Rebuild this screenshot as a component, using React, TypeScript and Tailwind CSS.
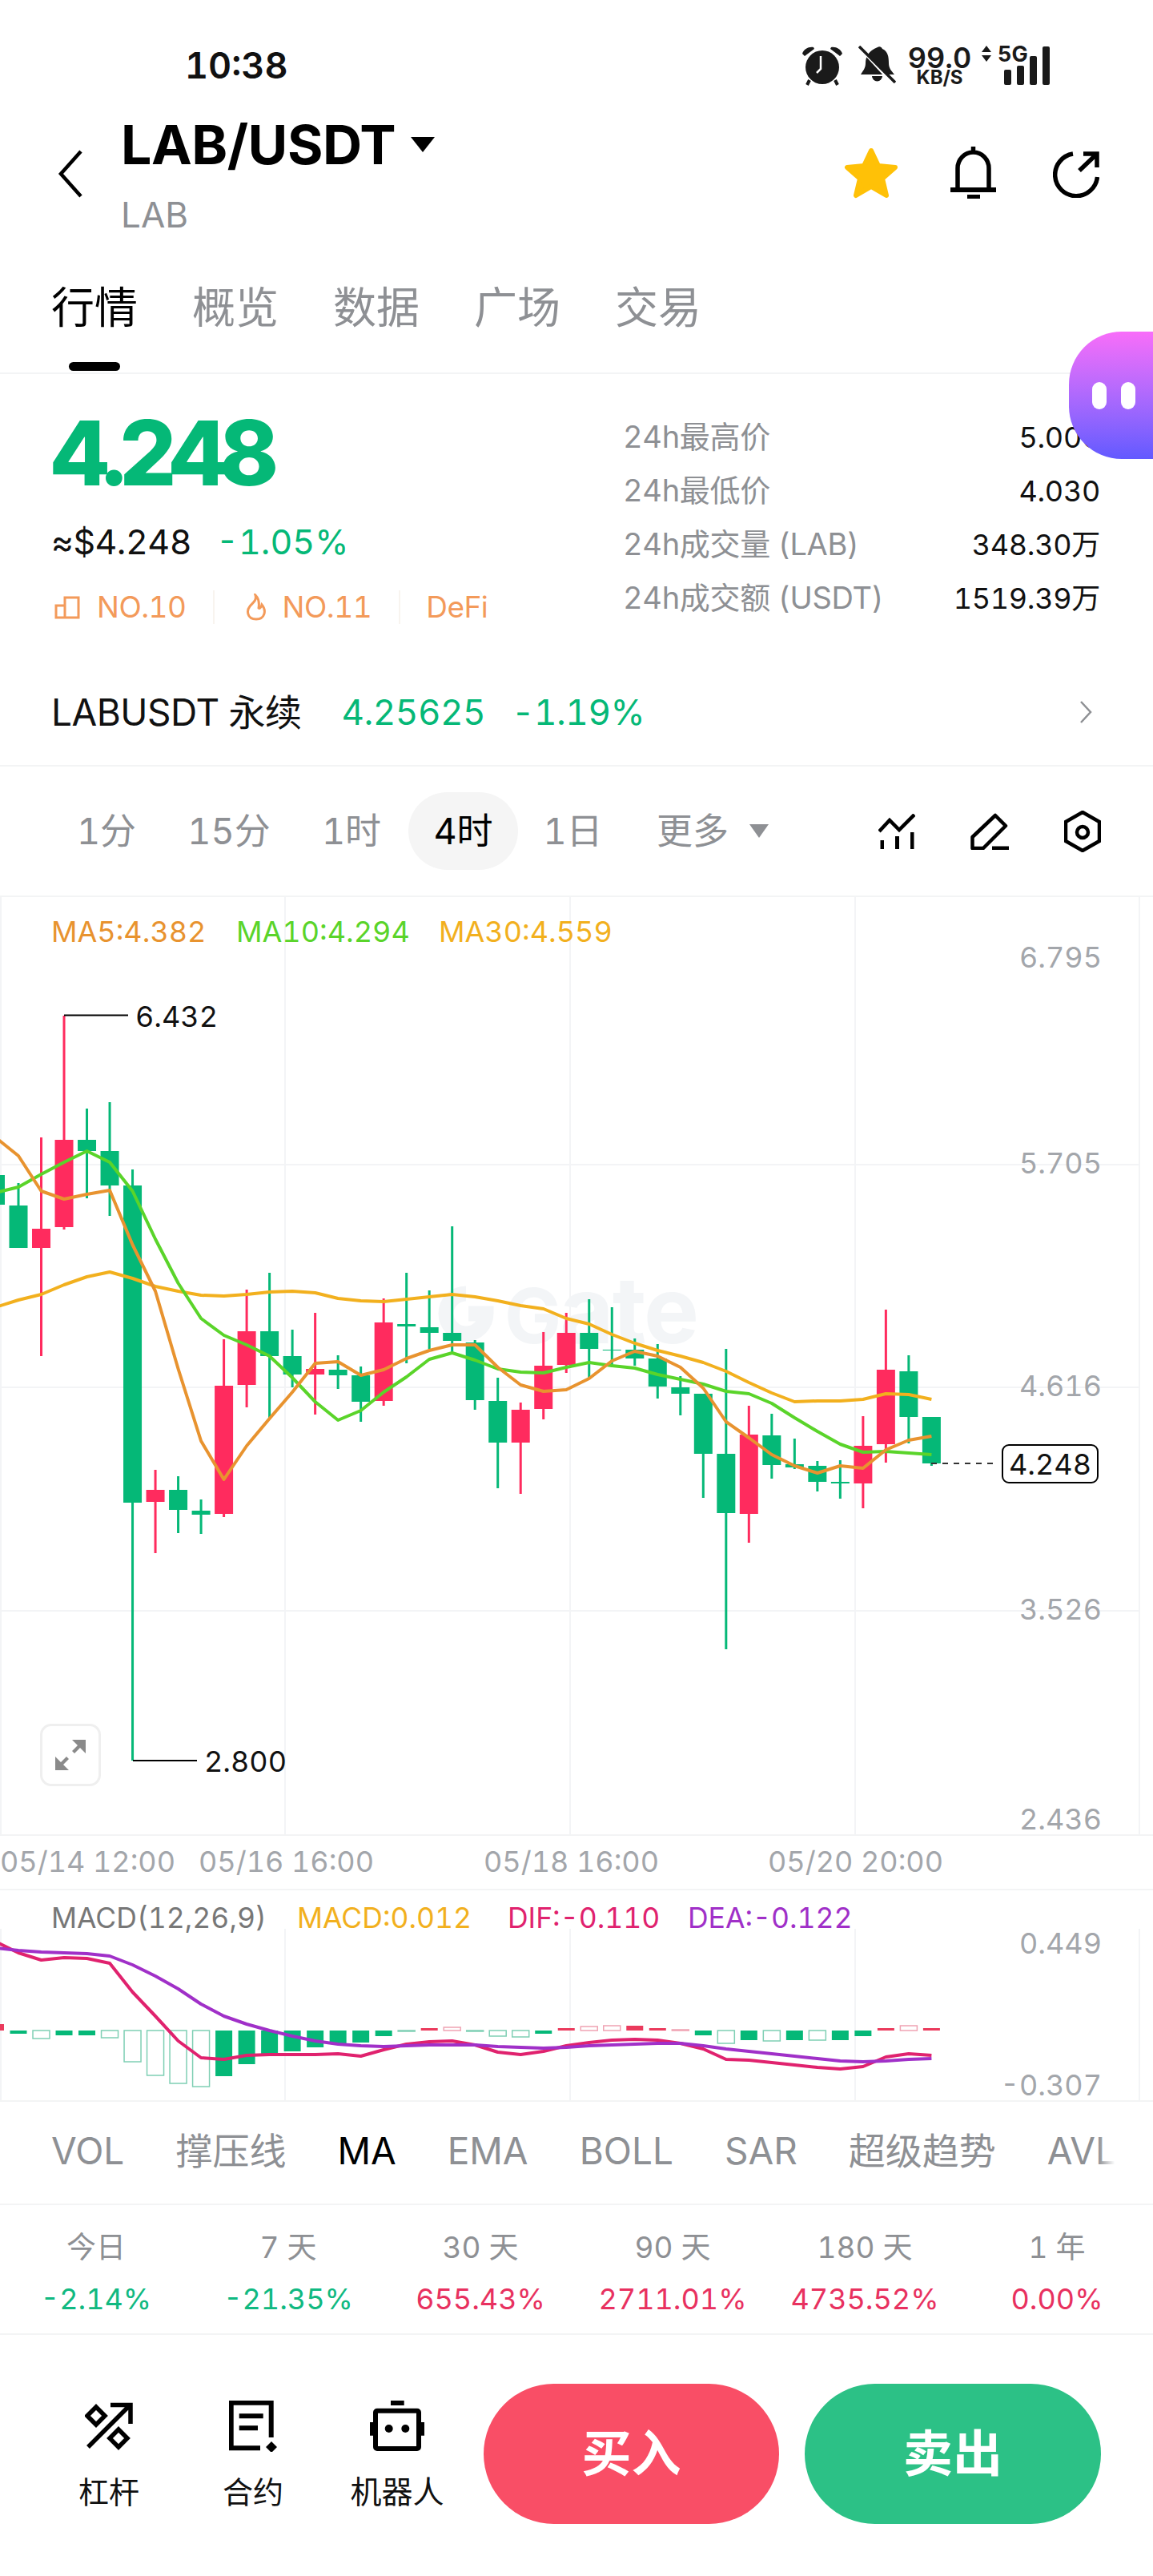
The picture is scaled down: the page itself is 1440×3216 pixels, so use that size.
const GREEN = "#05B877";
const RED = "#FF2B5E";

// candle x position by index, chart svg uses page coordinates in its viewBox
const cx = (i: number) => 23 + (i - 1) * 28.51;

// kind, wick top, wick bottom, body top, body bottom
const candles: [string, number, number, number, number][] = [
  ["g", 1467, 1504, 1467, 1504],
  ["g", 1477, 1558, 1505, 1558],
  ["r", 1420, 1693, 1534, 1558],
  ["r", 1268, 1535, 1423, 1532],
  ["g", 1384, 1496, 1423, 1437],
  ["g", 1376, 1518, 1437, 1480],
  ["g", 1460, 2198, 1480, 1876],
  ["r", 1835, 1939, 1860, 1875],
  ["g", 1843, 1914, 1860, 1885],
  ["g", 1872, 1915, 1886, 1891],
  ["r", 1672, 1894, 1730, 1890],
  ["r", 1610, 1757, 1662, 1729],
  ["g", 1589, 1771, 1662, 1693],
  ["g", 1660, 1732, 1693, 1716],
  ["r", 1639, 1766, 1709, 1716],
  ["g", 1692, 1734, 1710, 1717],
  ["g", 1706, 1775, 1717, 1750],
  ["r", 1621, 1755, 1651, 1749],
  ["g", 1589, 1702, 1653, 1656],
  ["g", 1611, 1684, 1657, 1664],
  ["g", 1531, 1690, 1664, 1674],
  ["g", 1673, 1760, 1676, 1748],
  ["g", 1720, 1858, 1749, 1801],
  ["r", 1751, 1865, 1760, 1801],
  ["r", 1663, 1772, 1705, 1759],
  ["r", 1639, 1714, 1664, 1704],
  ["g", 1622, 1721, 1664, 1684],
  ["g", 1632, 1707, 1685, 1686],
  ["g", 1671, 1705, 1685, 1696],
  ["g", 1678, 1746, 1696, 1731],
  ["g", 1718, 1767, 1732, 1740],
  ["g", 1740, 1870, 1740, 1815],
  ["g", 1684, 2059, 1815, 1889],
  ["r", 1755, 1926, 1791, 1890],
  ["g", 1765, 1846, 1792, 1829],
  ["g", 1796, 1834, 1828, 1832],
  ["g", 1824, 1862, 1830, 1850],
  ["g", 1823, 1871, 1850, 1852],
  ["r", 1768, 1883, 1805, 1852],
  ["r", 1635, 1826, 1710, 1803],
  ["g", 1692, 1802, 1712, 1769],
  ["g", 1769, 1830, 1769, 1827],
];

const ma5 = [1420, 1443, 1487, 1497, 1491, 1486, 1554, 1612, 1709, 1799, 1847, 1805, 1771, 1738, 1702, 1700, 1717, 1710, 1696, 1686, 1679, 1679, 1707, 1729, 1737, 1735, 1721, 1699, 1687, 1693, 1707, 1733, 1775, 1795, 1816, 1830, 1839, 1830, 1833, 1810, 1798, 1793];
const ma10 = [1489, 1482, 1466, 1451, 1437, 1451, 1487, 1547, 1602, 1646, 1667, 1679, 1693, 1720, 1750, 1773, 1761, 1738, 1719, 1697, 1689, 1698, 1709, 1713, 1714, 1707, 1701, 1705, 1708, 1716, 1722, 1728, 1737, 1740, 1752, 1770, 1787, 1803, 1813, 1812, 1814, 1816];
const ma30 = [1632, 1623, 1616, 1604, 1594, 1588, 1596, 1606, 1612, 1617, 1618, 1616, 1613, 1612, 1614, 1621, 1624, 1625, 1622, 1619, 1616, 1619, 1624, 1630, 1634, 1646, 1653, 1666, 1677, 1686, 1693, 1701, 1712, 1726, 1739, 1750, 1749, 1749, 1747, 1740, 1741, 1747];
const dif = [2424, 2438, 2447, 2444, 2445, 2451, 2487, 2517, 2548, 2569, 2571, 2566, 2565, 2565, 2565, 2564, 2567, 2559, 2552, 2549, 2548, 2553, 2562, 2565, 2561, 2554, 2550, 2547, 2546, 2547, 2551, 2558, 2571, 2572, 2575, 2578, 2581, 2583, 2580, 2568, 2564, 2566];
const dea = [2432, 2435, 2437, 2438, 2439, 2442, 2453, 2467, 2483, 2502, 2517, 2527, 2535, 2542, 2548, 2552, 2554, 2555, 2554, 2553, 2553, 2553, 2555, 2556, 2557, 2556, 2554, 2553, 2552, 2551, 2551, 2554, 2558, 2561, 2564, 2567, 2570, 2573, 2574, 2573, 2571, 2570];

// macd bars: kind (g/r filled, G/R hollow), height above or below the zero line
const bars: [string, number][] = [
  ["r", 8], ["g", 4], ["G", 10], ["g", 6], ["g", 6], ["G", 9], ["G", 39], ["G", 56], ["G", 66], ["G", 70],
  ["g", 57], ["g", 42], ["g", 32], ["g", 26], ["g", 21], ["g", 17], ["g", 15], ["g", 7], ["G", 1], ["r", 3],
  ["R", 4], ["G", 1], ["G", 7], ["G", 8], ["g", 4], ["r", 3], ["R", 5], ["R", 6], ["r", 6], ["r", 3],
  ["R", 1], ["g", 6], ["G", 16], ["g", 12], ["G", 13], ["g", 12], ["G", 12], ["g", 12], ["g", 7], ["r", 3],
  ["R", 6], ["r", 3],
];

const pts = (ys: number[]) => ys.map((y, i) => `${cx(i)},${y}`).join(" ");

function StatusBar() {
  return (
    <div className="flex h-[128px] items-start">
      <span className="ml-[231px] mt-[59px] text-[45px] font-semibold leading-[46px] text-[#111]">10:38</span>
      <div className="ml-auto mr-[126px] mt-[57px] flex items-start text-[#1a1a1a]">
        <svg width="50" height="50" viewBox="0 0 50 50">
          <circle cx="25" cy="27" r="21" fill="#1a1a1a" />
          <path d="M0 10C2 4 8 1 14 2L15 4 3 13Z M50 10C48 4 42 1 36 2L35 4 47 13Z" fill="#1a1a1a" />
          <path d="M9 43L6 49M41 43L44 49" stroke="#1a1a1a" strokeWidth="4" />
          <path d="M23 13V29L18 34" stroke="#fff" strokeWidth="2.5" fill="none" />
        </svg>
        <svg className="ml-[20px]" width="47" height="47" viewBox="0 0 47 47">
          <path d="M24 2A4 4 0 0 1 30 4C37 7 38 14 38 22C38 28 41 31 45 36H3C6 31 9 28 9 22C9 14 13 6 24 2Z" fill="#1a1a1a" />
          <path d="M17 38H30A6.5 6.5 0 0 1 17 38Z" fill="#1a1a1a" />
          <path d="M-3 -3L43 47" stroke="#fff" strokeWidth="4" />
          <path d="M1 1L46 46" stroke="#1a1a1a" strokeWidth="3.5" />
        </svg>
        <div className="ml-[16px] flex w-[77px] flex-col items-center">
          <span className="text-[36px] font-semibold leading-[30px]">99.0</span>
          <span className="text-[24px] font-bold leading-[20px]">KB/S</span>
        </div>
        <svg className="ml-[14px]" width="12" height="20" viewBox="0 0 12 20">
          <path d="M6 0L12 8H0Z M6 20L0 12H12Z" fill="#1a1a1a" />
        </svg>
        <div className="relative ml-[16px] h-[49px] w-[60px]">
          <span className="absolute left-[-8px] top-[-2px] text-[27px] font-bold leading-[26px]">5G</span>
          <div className="absolute bottom-0 left-0 flex items-end gap-[7px]">
            <div className="h-[19px] w-[9px] rounded-[2px] bg-[#1a1a1a]" />
            <div className="h-[24px] w-[9px] rounded-[2px] bg-[#1a1a1a]" />
            <div className="h-[36px] w-[9px] rounded-[2px] bg-[#1a1a1a]" />
            <div className="h-[48px] w-[9px] rounded-[2px] bg-[#1a1a1a]" />
          </div>
        </div>
      </div>
    </div>
  );
}

function Header() {
  return (
    <div className="flex h-[170px] items-start pl-[72px]">
      <svg className="mt-[59px]" width="31" height="60" viewBox="0 0 31 60">
        <path d="M29 2L4 30L29 58" fill="none" stroke="#000" strokeWidth="4.5" />
      </svg>
      <div className="ml-[48px] mt-[18px]">
        <div className="flex items-center">
          <span className="text-[68px] font-bold leading-[68px] tracking-[-0.5px] text-black">LAB/USDT</span>
          <svg className="ml-[19px]" width="30" height="19" viewBox="0 0 30 19">
            <path d="M0 0H30L15 19Z" fill="#000" />
          </svg>
        </div>
        <div className="mt-[32px] text-[44px] leading-[44px] text-[#8E9094]">LAB</div>
      </div>
      <div className="ml-auto mr-[67px] flex items-start">
        <svg className="mt-[56px]" width="68" height="64" viewBox="0 0 68 64">
          <path d="M34 4L43 23L64 25L48 39L53 60L34 49L15 60L20 39L4 25L25 23Z" fill="#FFC107" stroke="#FFC107" strokeWidth="6" strokeLinejoin="round" />
        </svg>
        <svg className="ml-[65px] mt-[55px]" width="57" height="65" viewBox="0 0 57 65">
          <path d="M28.5 0V7M9 51V27A19.5 20 0 0 1 48 27V51" fill="none" stroke="#000" strokeWidth="5.5" />
          <path d="M0 51H57V57H0Z M21 60H37V65H21Z" fill="#000" />
        </svg>
        <svg className="ml-[71px] mt-[61px]" width="58" height="58" viewBox="0 0 58 58">
          <path d="M25 3A26.5 26.5 0 1 0 55.5 32" fill="none" stroke="#000" strokeWidth="5.5" />
          <path d="M33 24L54 4M38 3H55V20" fill="none" stroke="#000" strokeWidth="5.5" />
        </svg>
      </div>
    </div>
  );
}

function Tabs() {
  const rest = ["概览", "数据", "广场", "交易"];
  return (
    <div className="flex h-[169px] gap-[68px] border-b-2 border-[#F3F4F5] pl-[64px] pt-[60px]">
      <div className="flex flex-col items-center">
        <span className="text-[54px] leading-[54px] text-black">行情</span>
        <div className="mt-[40px] h-[11px] w-[64px] rounded-full bg-black" />
      </div>
      {rest.map((tab) => (
        <span key={tab} className="text-[54px] leading-[54px] text-[#8E9094]">{tab}</span>
      ))}
    </div>
  );
}

function PriceInfo() {
  const rows = [
    ["24h最高价", "5.000"],
    ["24h最低价", "4.030"],
    ["24h成交量 (LAB)", "348.30万"],
    ["24h成交额 (USDT)", "1519.39万"],
  ];
  return (
    <div className="flex h-[358px] justify-between pl-[64px] pr-[66px]">
      <div className="pt-[42px]">
        <div className="text-[112px] font-extrabold leading-[112px] tracking-[-9px] text-[#05B877]">4.248</div>
        <div className="mt-[34px] flex text-[43px] leading-[42px]">
          <span className="tracking-[-0.5px] text-[#111]">≈$4.248</span>
          <span className="ml-[31px] text-[#05B877]">-1.05%</span>
        </div>
        <div className="mt-[40px] flex h-[42px] items-center text-[37px] tracking-[-0.5px] text-[#F39A5A]">
          <svg className="ml-[4px]" width="32" height="30" viewBox="0 0 32 30">
            <path d="M2 13H13V28H2Z M13 3H30V28H13Z" fill="none" stroke="#F39A5A" strokeWidth="3" />
          </svg>
          <span className="ml-[21px]">NO.10</span>
          <div className="ml-[33px] h-[42px] w-[2px] bg-[#F8F4EF]" />
          <svg className="ml-[37px]" width="30" height="34" viewBox="0 0 30 34">
            <path d="M14 2C16 9 10 12 7 16C3 21 3 32 15 32C26 32 28 21 22 14C21 18 19 19 18 18C19 12 18 6 14 2Z" fill="none" stroke="#F39A5A" strokeWidth="3" />
          </svg>
          <span className="ml-[18px]">NO.11</span>
          <div className="ml-[34px] h-[42px] w-[2px] bg-[#F8F4EF]" />
          <span className="ml-[32px]">DeFi</span>
        </div>
      </div>
      <div className="w-[596px] pt-[45px]">
        {rows.map(([label, value]) => (
          <div key={label} className="flex h-[67px] items-center justify-between">
            <span className="text-[38px] tracking-[-0.3px] text-[#8E9094]">{label}</span>
            <span className="text-[36px] tracking-[-0.3px] text-[#111]">{value}</span>
          </div>
        ))}
      </div>
    </div>
  );
}

function Perpetual() {
  return (
    <div className="flex h-[132px] items-center border-b-2 border-[#F3F4F5] pb-[2px] pl-[64px] pr-[76px] text-[44px]">
      <span className="text-[46px] tracking-[-0.5px] text-[#111]">LABUSDT 永续</span>
      <span className="ml-[50px] tracking-[-0.5px] text-[#05B877]">4.25625</span>
      <span className="ml-[33px] tracking-[-0.5px] text-[#05B877]">-1.19%</span>
      <svg className="ml-auto" width="16" height="28" viewBox="0 0 16 28">
        <path d="M2 1L14 14L2 27" fill="none" stroke="#8E9094" strokeWidth="2.5" />
      </svg>
    </div>
  );
}

function Intervals() {
  return (
    <div className="flex h-[163px] items-center border-b-2 border-[#F3F4F5] text-[45px] text-[#8E9094]">
      <span className="ml-[64px] w-[138px] text-center">1分</span>
      <span className="ml-[15px] w-[138px] text-center">15分</span>
      <span className="ml-[15px] w-[138px] text-center">1时</span>
      <span className="ml-[2px] flex h-[97px] w-[137px] items-center justify-center rounded-full bg-[#F5F5F5] text-black">4时</span>
      <span className="w-[137px] text-center">1日</span>
      <span className="ml-[36px]">更多</span>
      <svg className="ml-[26px]" width="24" height="17" viewBox="0 0 24 17">
        <path d="M0 0H24L12 17Z" fill="#8E9094" />
      </svg>
      <svg className="ml-auto" width="46" height="44" viewBox="0 0 46 44">
        <path d="M1 22L14 8L26 20L45 1" fill="none" stroke="#000" strokeWidth="4.5" />
        <path d="M2.5 33H7V44H2.5Z M21 28H26V44H21Z M40 23H44.5V44H40Z" fill="#000" />
      </svg>
      <svg className="ml-[69px]" width="48" height="46" viewBox="0 0 48 46">
        <path d="M31 3L44 16L16 44H2.5V30Z" fill="none" stroke="#000" strokeWidth="4.5" strokeLinejoin="round" />
        <path d="M27 41.5H48V46H27Z" fill="#000" />
      </svg>
      <svg className="ml-[69px] mr-[65px]" width="46" height="52" viewBox="0 0 46 52">
        <path d="M23 2L44 14V38L23 50L2 38V14Z" fill="none" stroke="#000" strokeWidth="4.5" />
        <circle cx="23" cy="27" r="7" fill="none" stroke="#000" strokeWidth="4.5" />
      </svg>
    </div>
  );
}

function GridLines({ top, bottom, rows }: { top: number; bottom: number; rows: number[] }) {
  return (
    <g stroke="#F3F4F6" strokeWidth="2">
      {[1, 356, 712, 1068, 1423].map((x) => (
        <line key={x} x1={x} x2={x} y1={top} y2={bottom} />
      ))}
      {rows.map((y) => (
        <line key={y} x1={0} x2={1423} y1={y} y2={y} />
      ))}
    </g>
  );
}

function CandleChart() {
  const axis: [string, number][] = [["6.795", 1195], ["5.705", 1452], ["4.616", 1730], ["3.526", 2009], ["2.436", 2271]];
  return (
    <div className="relative h-[1172px] border-b-2 border-[#F3F4F5]">
      <svg className="absolute left-0 top-0 overflow-visible" width="1440" height="1170" viewBox="0 1120 1440 1170">
        <GridLines top={1120} bottom={2290} rows={[1454, 1732, 2011]} />
        {/* watermark */}
        <g fill="#F3F5F7">
          <path d="M582 1615A25 25 0 1 0 607 1640H585" fill="none" stroke="#F3F5F7" strokeWidth="19" />
          <text x="630" y="1677" fontSize="116" fontWeight="700" letterSpacing="-2">
            <tspan fontSize="95">G</tspan>ate
          </text>
        </g>
        {candles.map(([kind, wt, wb, bt, bb], i) => {
          const fill = kind === "r" ? RED : GREEN;
          return (
            <g key={i} fill={fill}>
              <rect x={cx(i) - 1.5} y={wt} width="3" height={wb - wt} />
              <rect x={cx(i) - 11.5} y={bt} width="23" height={Math.max(bb - bt, 1)} />
            </g>
          );
        })}
        <polyline points={pts(ma30)} fill="none" stroke="#F2B01E" strokeWidth="4" strokeLinejoin="round" />
        <polyline points={pts(ma10)} fill="none" stroke="#5AD42A" strokeWidth="4" strokeLinejoin="round" />
        <polyline points={pts(ma5)} fill="none" stroke="#E8932F" strokeWidth="4" strokeLinejoin="round" />
        {/* high / low markers */}
        <path d="M80 1267.5H160M166 2198H246" stroke="#000" strokeWidth="2" />
        <text x="169" y="1282" fontSize="36" fill="#111">6.432</text>
        <text x="255" y="2212" fontSize="36" fill="#111">2.800</text>
        {axis.map(([label, y]) => (
          <text key={label} x="1376" y={y + 13} fontSize="36" fill="#A3A6AB" textAnchor="end">{label}</text>
        ))}
        {/* last price tag */}
        <line x1="1163" x2="1245" y1="1827" y2="1827" stroke="#333" strokeWidth="2" strokeDasharray="7 7" />
        <rect x="1252" y="1804" width="119" height="47" rx="8" fill="#fff" stroke="#000" strokeWidth="2" />
        <text x="1311.5" y="1841" fontSize="36" fill="#111" textAnchor="middle">4.248</text>
      </svg>
      <div className="relative flex pl-[64px] pt-[25px] text-[36px] leading-[36px]">
        <span className="w-[231px] text-[#E8932F]">MA5:4.382</span>
        <span className="w-[253px] text-[#5AD42A]">MA10:4.294</span>
        <span className="text-[#F2B01E]">MA30:4.559</span>
      </div>
      <div className="absolute left-[50px] top-[1032px] flex h-[78px] w-[76px] items-center justify-center rounded-[14px] border-[3px] border-[#EFEFEF] bg-white">
        <svg width="38" height="38" viewBox="0 0 38 38">
          <path d="M38 0V17L31 10L24 17L21 14L28 7L21 0Z M0 38V21L7 28L14 21L17 24L10 31L17 38Z" fill="#8A8A8A" />
        </svg>
      </div>
    </div>
  );
}

function DateAxis() {
  return (
    <div className="flex h-[68px] items-center border-b-2 border-[#F3F4F5] pb-[2px] text-[36px] text-[#A3A6AB]">
      <span className="w-[248px]">05/14 12:00</span>
      <span className="w-[356px]">05/16 16:00</span>
      <span className="w-[355px]">05/18 16:00</span>
      <span>05/20 20:00</span>
    </div>
  );
}

function MacdChart() {
  return (
    <div className="relative h-[264px] border-b-2 border-[#F3F4F5]">
      <svg className="absolute left-0 top-0 overflow-visible" width="1440" height="262" viewBox="0 2360 1440 262">
        <GridLines top={2408} bottom={2622} rows={[]} />
        {bars.map(([kind, h], i) => {
          const color = kind === "r" || kind === "R" ? "#EA3A5C" : GREEN;
          const up = kind === "r" || kind === "R";
          const hollow = kind === "G" || kind === "R";
          const y = up ? 2535 - h : 2535;
          return (
            <rect
              key={i}
              x={cx(i) - 10.5}
              y={y}
              width="21"
              height={h}
              fill={hollow ? "#fff" : color}
              stroke={hollow ? (up ? "#EFA3B3" : "#7FCFB4") : "none"}
              strokeWidth={hollow ? 1.5 : 0}
            />
          );
        })}
        <polyline points={pts(dif)} fill="none" stroke="#E0226E" strokeWidth="4" strokeLinejoin="round" />
        <polyline points={pts(dea)} fill="none" stroke="#A030C8" strokeWidth="4" strokeLinejoin="round" />
        <text x="1376" y="2439" fontSize="36" fill="#A3A6AB" textAnchor="end">0.449</text>
        <text x="1376" y="2616" fontSize="36" fill="#A3A6AB" textAnchor="end">-0.307</text>
      </svg>
      <div className="relative flex pl-[64px] pt-[17px] text-[35.5px] leading-[36px]">
        <span className="w-[307px] text-[#777]">MACD(12,26,9)</span>
        <span className="w-[263px] text-[#F2B01E]">MACD:0.012</span>
        <span className="w-[225px] text-[#E0226E]">DIF:-0.110</span>
        <span className="text-[#A030C8]">DEA:-0.122</span>
      </div>
    </div>
  );
}

function Indicators() {
  const items = ["VOL", "撑压线", "MA", "EMA", "BOLL", "SAR", "超级趋势", "AVL"];
  return (
    <div className="relative flex h-[129px] items-center gap-[64px] overflow-hidden border-b-2 border-[#F3F4F5] pb-[4px] pl-[64px] text-[46px] text-[#8E9094]">
      {items.map((item) => (
        <span key={item} className={item === "MA" ? "shrink-0 text-black" : "shrink-0"}>{item}</span>
      ))}
      <div className="absolute bottom-0 right-0 top-0 w-[68px] bg-linear-to-r from-white/0 to-white to-30%" />
    </div>
  );
}

function Returns() {
  const stats = [
    ["今日", "-2.14%", true],
    ["7 天", "-21.35%", true],
    ["30 天", "655.43%", false],
    ["90 天", "2711.01%", false],
    ["180 天", "4735.52%", false],
    ["1 年", "0.00%", false],
  ] as const;
  return (
    <div className="grid h-[162px] grid-cols-6 border-b-2 border-[#F3F4F5] pt-[34px]">
      {stats.map(([label, value, down]) => (
        <div key={label} className="flex flex-col items-center">
          <span className="text-[37px] leading-[38px] text-[#8E9094]">{label}</span>
          <span className={down ? "mt-[26px] text-[36px] leading-[38px] text-[#10B981]" : "mt-[26px] text-[36px] leading-[38px] text-[#E8315F]"}>
            {value}
          </span>
        </div>
      ))}
    </div>
  );
}

function ActionBar() {
  return (
    <div className="flex items-start pl-[46px] pt-[61px]">
      <div className="flex w-[180px] flex-col items-center pt-[20px]">
        <div className="flex h-[65px] items-center">
          <svg width="60" height="60" viewBox="0 0 60 60">
            <path d="M14 6L25 17L14 28L3 17Z M42 34L53 45L42 56L31 45Z" fill="none" stroke="#000" strokeWidth="5.5" />
            <path d="M4 56L55 5M32 3.5H57V27" fill="none" stroke="#000" strokeWidth="5.5" />
          </svg>
        </div>
        <span className="mt-[31px] text-[38px] leading-[38px] text-[#111]">杠杆</span>
      </div>
      <div className="flex w-[180px] flex-col items-center pt-[20px]">
        <div className="flex h-[65px] items-center">
          <svg width="60" height="64" viewBox="0 0 60 64">
            <path d="M52.7 46V2.7H2.7V59.3H39" fill="none" stroke="#000" strokeWidth="6" />
            <path d="M12.7 16.3H42.7V22.3H12.7Z M12.7 31.3H36V37.3H12.7Z M53 51L60 58L53 65L46 58Z" fill="#000" />
          </svg>
        </div>
        <span className="mt-[31px] text-[38px] leading-[38px] text-[#111]">合约</span>
      </div>
      <div className="flex w-[180px] flex-col items-center pt-[20px]">
        <div className="flex h-[65px] items-center">
          <svg width="68" height="63" viewBox="0 0 68 63">
            <path d="M26 0H42.7V6H26Z M0 27H4.5V43.7H0Z M63.5 27H68V43.7H63.5Z" fill="#000" />
            <rect x="7" y="12.7" width="54" height="47.3" rx="2" fill="none" stroke="#000" strokeWidth="6" />
            <circle cx="23.7" cy="35" r="5" fill="#000" />
            <circle cx="44.3" cy="35" r="5" fill="#000" />
          </svg>
        </div>
        <span className="mt-[31px] text-[39px] leading-[38px] text-[#111]">机器人</span>
      </div>
      <button className="ml-[18px] flex h-[175px] w-[369px] items-center justify-center rounded-[88px] bg-[#F94E66] text-[62px] font-bold text-white">买入</button>
      <button className="ml-[32px] flex h-[175px] w-[370px] items-center justify-center rounded-[88px] bg-[#2CC186] text-[62px] font-bold text-white">卖出</button>
    </div>
  );
}

export default function App() {
  return (
    <div className="relative h-[3216px] w-[1440px] overflow-hidden bg-white font-['Inter','Noto_Sans_CJK_SC',sans-serif] tabular-nums">
      <StatusBar />
      <Header />
      <Tabs />
      <PriceInfo />
      <Perpetual />
      <Intervals />
      <CandleChart />
      <DateAxis />
      <MacdChart />
      <Indicators />
      <Returns />
      <ActionBar />
      {/* floating assistant bubble */}
      <div className="absolute right-0 top-[414px] flex h-[159px] w-[105px] items-center gap-[18px] rounded-l-[66px] bg-linear-to-b from-[#F86DF9] to-[#6259FF] pl-[29px]">
        <div className="h-[34px] w-[18px] rounded-full bg-white" />
        <div className="h-[34px] w-[18px] rounded-full bg-white" />
      </div>
    </div>
  );
}
